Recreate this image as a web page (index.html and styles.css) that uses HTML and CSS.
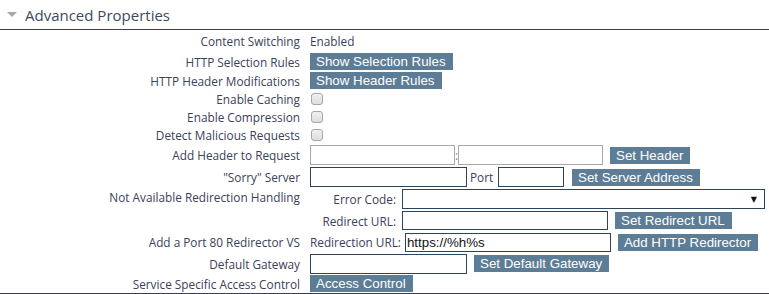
FILE: index.html
```html
<!DOCTYPE html>
<html lang="en">
<head>
<meta charset="utf-8">
<title>Advanced Properties</title>
<link rel="stylesheet" href="styles.css">
</head>
<body>
<div class="panel">
  <div class="section-head">
    <span class="caret"></span>
    <span class="title">Advanced Properties</span>
  </div>
  <div class="props">
    <div class="row h22">
      <div class="lbl">Content Switching</div>
      <div class="val">Enabled</div>
    </div>
    <div class="row h19">
      <div class="lbl">HTTP Selection Rules</div>
      <div class="val"><button class="btn">Show Selection Rules</button></div>
    </div>
    <div class="row h19">
      <div class="lbl">HTTP Header Modifications</div>
      <div class="val"><button class="btn">Show Header Rules</button></div>
    </div>
    <div class="row h18">
      <div class="lbl">Enable Caching</div>
      <div class="val"><input type="checkbox" class="chk"></div>
    </div>
    <div class="row h17">
      <div class="lbl">Enable Compression</div>
      <div class="val"><input type="checkbox" class="chk"></div>
    </div>
    <div class="row h19">
      <div class="lbl">Detect Malicious Requests</div>
      <div class="val"><input type="checkbox" class="chk"></div>
    </div>
    <div class="row h22">
      <div class="lbl">Add Header to Request</div>
      <div class="val">
        <input type="text" class="txt light w145">
        <span class="colon">:</span>
        <input type="text" class="txt light w145">
        <button class="btn gap7">Set Header</button>
      </div>
    </div>
    <div class="row h22">
      <div class="lbl">"Sorry" Server</div>
      <div class="val">
        <input type="text" class="txt w157">
        <span class="port">Port</span>
        <input type="text" class="txt w66">
        <button class="btn gap8">Set Server Address</button>
      </div>
    </div>
    <div class="row top">
      <div class="lbl sub-lbl">Not Available Redirection Handling</div>
      <div class="val sub">
        <div class="subrow h22">
          <span class="sublbl">Error Code:</span>
          <div class="select"><span class="arrow">▼</span></div>
        </div>
        <div class="subrow h21">
          <span class="sublbl">Redirect URL:</span>
          <input type="text" class="txt w206">
          <button class="btn gap7">Set Redirect URL</button>
        </div>
      </div>
    </div>
    <div class="row h22">
      <div class="lbl">Add a Port 80 Redirector VS</div>
      <div class="val">
        <span class="inlbl">Redirection URL:</span>
        <input type="text" class="txt w206" value="https://%h%s">
        <button class="btn gap7">Add HTTP Redirector</button>
      </div>
    </div>
    <div class="row h21">
      <div class="lbl">Default Gateway</div>
      <div class="val">
        <input type="text" class="txt w157">
        <button class="btn gap7">Set Default Gateway</button>
      </div>
    </div>
    <div class="row h19">
      <div class="lbl">Service Specific Access Control</div>
      <div class="val"><button class="btn">Access Control</button></div>
    </div>
  </div>
</div>
</body>
</html>
```

FILE: styles.css
```css
html, body {
  margin: 0;
  padding: 0;
  background: #ffffff;
}

body {
  font-family: "Open Sans", "DejaVu Sans", sans-serif;
  font-size: 11.8px;
  color: #3b4159;
}

.section-head {
  height: 29px;
  border-bottom: 1px solid #3b3f4d;
  display: flex;
  align-items: center;
  padding-left: 7px;
}

.caret {
  width: 0;
  height: 0;
  border-left: 5px solid transparent;
  border-right: 5px solid transparent;
  border-top: 5px solid #a8a8a8;
}

.title {
  margin-left: 8px;
  font-size: 15px;
  color: #3c4a5c;
}

.props {
  border-bottom: 1px solid #3b3f4d;
}

.row {
  display: flex;
  align-items: center;
}

.row.top {
  align-items: flex-start;
}

.h17 { height: 17px; }
.h18 { height: 18px; }
.h19 { height: 19px; }
.h21 { height: 21px; }
.h22 { height: 22px; }

.lbl {
  flex: none;
  width: 300px;
  text-align: right;
  white-space: nowrap;
}

.sub-lbl {
  line-height: 18px;
}

.val {
  margin-left: 10px;
  display: flex;
  align-items: center;
  white-space: nowrap;
}

.val.sub {
  flex-direction: column;
  align-items: flex-start;
}

.subrow {
  display: flex;
  align-items: center;
}

.sublbl {
  width: 86px;
  text-align: right;
  margin-right: 6px;
}

.inlbl {
  margin-right: 4px;
}

.btn {
  height: 17px;
  border: 0;
  margin: 0;
  padding: 0 7px 0 6px;
  background: #5d7d96;
  color: #ffffff;
  font-family: "Liberation Sans", Arial, sans-serif;
  font-size: 13.33px;
  line-height: 17px;
  cursor: pointer;
}

.gap7 { margin-left: 7px; }
.gap8 { margin-left: 8px; }

.chk {
  appearance: none;
  -webkit-appearance: none;
  margin: 0 0 0 1px;
  width: 12px;
  height: 12px;
  border: 1px solid #a6a6a6;
  border-radius: 3px;
  background: linear-gradient(#f0f0f0, #dedede);
  box-sizing: border-box;
}

.txt {
  box-sizing: border-box;
  height: 20px;
  margin: 0;
  padding: 0 1px;
  border: 1px solid #2d4458;
  background: #ffffff;
  font-family: "Liberation Sans", Arial, sans-serif;
  font-size: 13.33px;
  color: #111111;
  outline: none;
}

.txt.light {
  border-color: #a9a9a9;
}

.w145 { width: 145px; }
.w157 { width: 157px; }
.w66 { width: 66px; }
.w206 { width: 206px; height: 19px; }

.colon {
  width: 3px;
  text-align: center;
  color: #888888;
}

.port {
  margin-left: 3px;
  margin-right: 6px;
  width: 22px;
}

.select {
  box-sizing: border-box;
  width: 363px;
  height: 20px;
  border: 1px solid #2d4458;
  display: flex;
  align-items: center;
  justify-content: flex-end;
  padding-right: 7px;
}

.arrow {
  font-family: "DejaVu Sans", sans-serif;
  font-size: 8px;
  color: #111111;
}
```
